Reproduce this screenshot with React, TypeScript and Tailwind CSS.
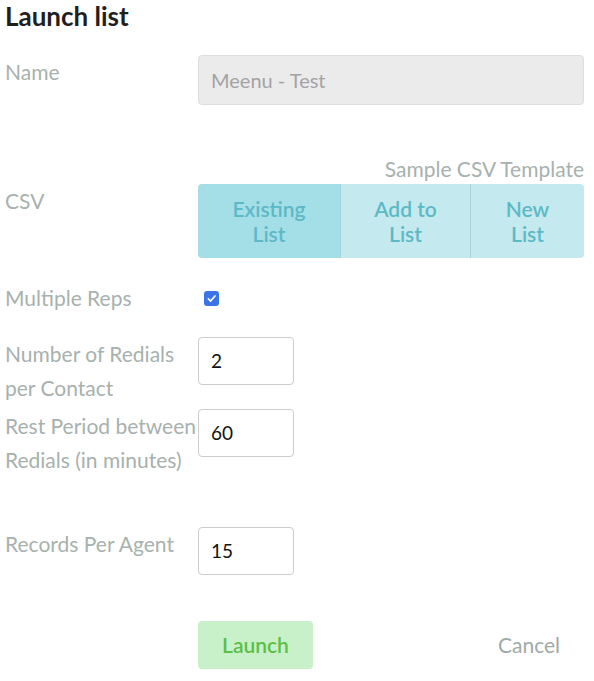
import React from "react";

const labelCls = "w-[193px] shrink-0 text-[21px] leading-[34px] text-[#a7b1ae] whitespace-nowrap";

function NumInput({ value }: { value: string }) {
  return (
    <div className="w-[96px] h-[48px] border border-[#cccccc] rounded-[4px] bg-white flex items-center pl-[12px] text-[19px] text-[#111]">
      {value}
    </div>
  );
}

export default function App() {
  return (
    <div
      className="w-[594px] h-[681px] bg-white pl-[5px] pr-[10px] overflow-hidden"
      style={{ fontFamily: "Lato, 'Noto Sans', sans-serif" }}
    >
      <h1 className="pt-[1px] text-[26px] leading-[30px] font-bold text-[#1f1f1f]">Launch list</h1>

      <div className="flex mt-[24px]">
        <div className={labelCls}>Name</div>
        <div className="flex-1 h-[50px] bg-[#ebebeb] border border-[#dedede] rounded-[4px] flex items-center pl-[12px] text-[20px] text-[#a3a3a3]">
          Meenu - Test
        </div>
      </div>

      <div className="mt-[50px] text-right text-[21px] leading-[28px] text-[#a7b1ae]">Sample CSV Template</div>

      <div className="flex mt-[1px]">
        <div className={labelCls}>CSV</div>
        <div className="flex-1 h-[74px] flex rounded-[4px] overflow-hidden text-[21px] leading-[25px] font-semibold text-[#5cb9c6]">
          <div className="w-[142px] bg-[#a4dee6] flex items-center justify-center text-center">
            Existing
            <br />
            List
          </div>
          <div className="w-[130px] bg-[#c4e9ee] border-l border-[#a9d2d8] flex items-center justify-center text-center">
            Add to
            <br />
            List
          </div>
          <div className="flex-1 bg-[#c4e9ee] border-l border-[#a9d2d8] flex items-center justify-center text-center">
            New
            <br />
            List
          </div>
        </div>
      </div>

      <div className="flex mt-[23px] items-center">
        <div className={labelCls}>Multiple Reps</div>
        <div className="ml-[6px] w-[15px] h-[15px] rounded-[3px] bg-[#3c74e8] flex items-center justify-center">
          <svg width="11" height="11" viewBox="0 0 12 12" fill="none">
            <path d="M2.5 6.3 L5 8.8 L9.8 3.2" stroke="white" strokeWidth="1.8" strokeLinecap="round" strokeLinejoin="round" />
          </svg>
        </div>
      </div>

      <div className="flex mt-[22px]">
        <div className={labelCls}>
          Number of Redials
          <br />
          per Contact
        </div>
        <NumInput value="2" />
      </div>

      <div className="flex mt-[4px]">
        <div className={labelCls}>
          Rest Period between
          <br />
          Redials (in minutes)
        </div>
        <NumInput value="60" />
      </div>

      <div className="flex mt-[50px]">
        <div className={labelCls}>Records Per Agent</div>
        <NumInput value="15" />
      </div>

      <div className="flex mt-[46px] items-center">
        <div className="w-[193px] shrink-0" />
        <button className="w-[115px] h-[48px] rounded-[4px] bg-[#c9f1c9] text-[21px] font-semibold text-[#5bbf48]">
          Launch
        </button>
        <div className="flex-1" />
        <button className="w-[110px] h-[48px] text-[21px] text-[#a0aaa6]">Cancel</button>
      </div>
    </div>
  );
}
